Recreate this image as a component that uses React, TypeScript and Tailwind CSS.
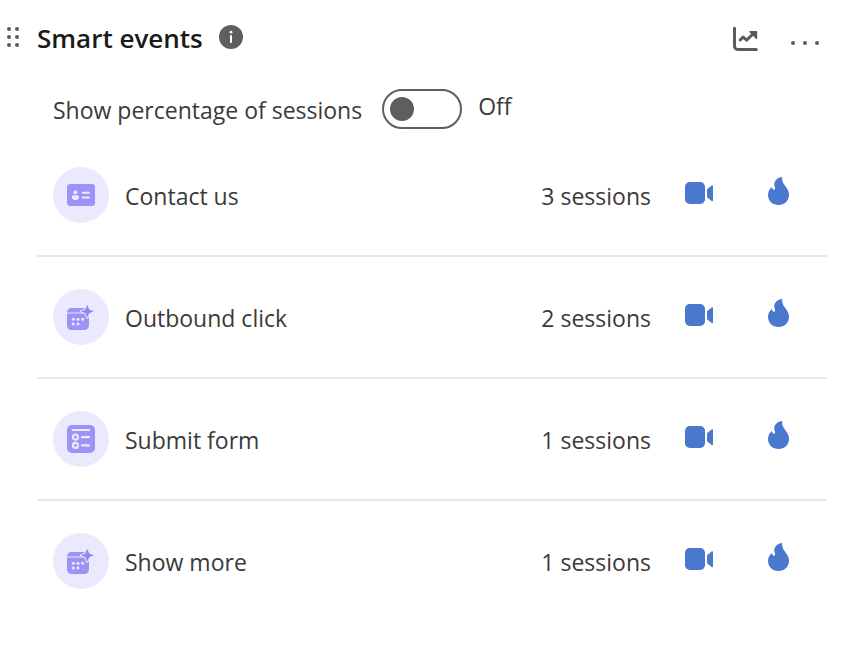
import { useState } from "react";

type EventIconName = "contact" | "calendar" | "form";

type SmartEvent = {
  name: string;
  sessions: number;
  icon: EventIconName;
};

const events: SmartEvent[] = [
  { name: "Contact us", sessions: 3, icon: "contact" },
  { name: "Outbound click", sessions: 2, icon: "calendar" },
  { name: "Submit form", sessions: 1, icon: "form" },
  { name: "Show more", sessions: 1, icon: "calendar" },
];

const DragHandle = () => (
  <svg className="h-6 w-6 shrink-0 text-[#5c5b59]" viewBox="0 0 24 24" fill="currentColor" aria-hidden="true">
    {[3, 11, 19].map((y) => (
      <g key={y}>
        <circle cx="4" cy={y} r="2" />
        <circle cx="12" cy={y} r="2" />
      </g>
    ))}
  </svg>
);

const InfoIcon = () => (
  <svg className="h-6 w-6" viewBox="0 0 24 24" aria-hidden="true">
    <circle cx="12" cy="11" r="12" fill="#5f5e5c" />
    <circle cx="12" cy="6.2" r="1.4" fill="#fff" />
    <rect x="11" y="9" width="2" height="8" rx="0.8" fill="#fff" />
  </svg>
);

const ChartIcon = () => (
  <svg className="h-6 w-6 overflow-visible" viewBox="0 0 24 24" fill="none" stroke="#5c5b59" strokeWidth="3" strokeLinecap="round" strokeLinejoin="round" aria-hidden="true">
    <path d="M1.5 2.2v18a3.2 3.2 0 0 0 3.2 3.2h18.6" />
    <path d="M7.2 14l2.9-3 3.5 3.2 7.6-7.4" />
    <path d="M17 5.8h6.4v6.4z" fill="#5c5b59" strokeWidth="1.6" />
  </svg>
);

const MoreIcon = () => (
  <svg className="h-6 w-8" viewBox="0 0 32 24" fill="#5c5b59" aria-hidden="true">
    <circle cx="4" cy="17" r="2" />
    <circle cx="16" cy="17" r="2" />
    <circle cx="28" cy="17" r="2" />
  </svg>
);

/* All three are drawn on the same 28px grid */
const EventIcon = ({ name }: { name: EventIconName }) => {
  if (name === "contact") {
    return (
      <svg className="h-7 w-7" viewBox="0 0 28 28" aria-hidden="true">
        <rect y="3" width="28" height="22" rx="3" fill="#9c93f7" />
        <g fill="#ebe9fd">
          <circle cx="8.4" cy="11.3" r="2" />
          <path d="M6.5 14.3h3.8c1 0 1.7.7 1.700 1.700 0 2-1.500 3.100-3.600 3.100S4.800 18 4.800 16c0-1 .7-1.700 1.700-1.700z" />
          <rect x="14.7" y="10.7" width="8.3" height="2" rx="1" />
          <rect x="14.7" y="15.4" width="8.3" height="2" rx="1" />
        </g>
      </svg>
    );
  }

  if (name === "form") {
    return (
      <svg className="h-7 w-7" viewBox="0 0 28 28" aria-hidden="true">
        <rect width="28" height="28" rx="5" fill="#9c93f7" />
        <g fill="none" stroke="#ebe9fd" strokeWidth="2.2" strokeLinecap="round">
          <path d="M5.8 5h16.4M15 12.2h7M15 20.4h7" />
          <circle cx="8.4" cy="12.2" r="2.5" />
          <circle cx="8.4" cy="20.4" r="2.5" />
        </g>
      </svg>
    );
  }

  return (
    <svg className="h-7 w-7" viewBox="0 0 28 28" aria-hidden="true">
      <path d="M4.5 5H22v4.4H0A4.4 4.4 0 0 1 4.5 5z" fill="#9c93f7" />
      <path d="M0 10.4h22v12.1a4.5 4.5 0 0 1-4.5 4.5h-13A4.5 4.5 0 0 1 0 22.5z" fill="#9c93f7" />
      <path
        d="M20.3 1.8l1.9 4.6 4.6 1.9-4.6 1.9-1.9 4.6-1.900-4.6-4.600-1.900 4.600-1.900z"
        fill="#9189f2"
        stroke="#ebe9fd"
        strokeWidth="2"
        strokeLinejoin="round"
        paintOrder="stroke"
      />
      <g fill="#ebe9fd">
        <circle cx="6.3" cy="16.3" r="1.5" />
        <circle cx="11" cy="16.3" r="1.5" />
        <circle cx="15.7" cy="16.3" r="1.5" />
        <circle cx="6.3" cy="21" r="1.5" />
        <circle cx="11" cy="21" r="1.5" />
      </g>
    </svg>
  );
};

const VideoIcon = () => (
  <svg className="h-7 w-7" viewBox="0 0 28 28" fill="#4a78cf" aria-hidden="true">
    <rect y="3" width="20" height="22" rx="4.8" />
    <path d="M22 10.3l4.6-3.9c.6-.5 1.4-.2 1.4.6v14.5c0 .8-.8 1.1-1.4.6L22 18.2z" />
  </svg>
);

const FlameIcon = () => (
  <svg className="h-7 w-7" viewBox="0 0 28 28" fill="#4a78cf" aria-hidden="true">
    <path d="M17.2 0c-4.200.2-7.700 3.200-8 7.300-.1 1.700 1.100 3.200.9 4.500-.2 1-1.500 1.200-2.200.5-.6-.6-.7-1.500-.9-2.300-2.400 1.900-4 4.500-4 7.700C3 23.800 7.700 28 13.500 28S24 23.800 24 17.700c0-2.700-1-5-2.700-7.300-2.300-3.100-4.700-6-4.100-10.400z" />
  </svg>
);

const EventRow = ({ event }: { event: SmartEvent }) => (
  <li className="flex h-[122px] items-center border-b-2 border-[#e8e8e8] pr-6 pl-4 last:border-transparent">
    <span className="flex size-14 shrink-0 items-center justify-center rounded-full bg-[#ebe9fd]">
      <EventIcon name={event.icon} />
    </span>
    <span className="min-w-0 flex-1 pt-0.5 pl-4">{event.name}</span>
    <span className="pt-0.5 pr-6 whitespace-nowrap">{event.sessions} sessions</span>
    <button type="button" aria-label={`Recordings for ${event.name}`} className="mr-8 flex h-12 w-12 cursor-pointer items-start justify-center pt-2">
      <VideoIcon />
    </button>
    <button type="button" aria-label={`Heatmap for ${event.name}`} className="flex h-12 w-12 cursor-pointer items-start justify-center pt-1.5">
      <FlameIcon />
    </button>
  </li>
);

export default function App() {
  const [showPercentage, setShowPercentage] = useState(false);

  return (
    <section className="min-h-screen w-full bg-white pt-6 font-['Open_Sans','Segoe_UI',sans-serif] text-[23px] leading-8 text-[#3b3a39]">
      <header className="flex h-7 items-center pr-[42px] pl-[5px]">
        <DragHandle />
        <h2 className="ml-2 text-[26px] font-semibold text-[#1b1a19]">Smart events</h2>
        <button type="button" aria-label="About smart events" className="ml-4 cursor-pointer [&>svg]:overflow-visible">
          <InfoIcon />
        </button>
        <button type="button" aria-label="View chart" className="ml-auto cursor-pointer">
          <ChartIcon />
        </button>
        <button type="button" aria-label="More options" className="ml-8 cursor-pointer">
          <MoreIcon />
        </button>
      </header>

      <div className="pr-9 pl-[37px]">
        <div className="mt-[37px] flex h-10 items-center pl-4">
          <label htmlFor="percentage" className="pt-0.5">
            Show percentage of sessions
          </label>
          <span className="relative ml-5 h-10 w-20 shrink-0">
            <input
              id="percentage"
              type="checkbox"
              role="switch"
              checked={showPercentage}
              onChange={(e) => setShowPercentage(e.target.checked)}
              className="peer block h-10 w-20 cursor-pointer appearance-none rounded-full border-2 border-[#5f5e5c] bg-white checked:bg-[#4a78cf]"
            />
            <span className="pointer-events-none absolute top-2 left-2 size-6 rounded-full bg-[#5f5e5c] peer-checked:left-12 peer-checked:bg-white" />
          </span>
          <span className="ml-4 pb-1.5">{showPercentage ? "On" : "Off"}</span>
        </div>

        <ul className="mt-1.5">
          {events.map((event) => (
            <EventRow key={event.name} event={event} />
          ))}
        </ul>
      </div>
    </section>
  );
}
